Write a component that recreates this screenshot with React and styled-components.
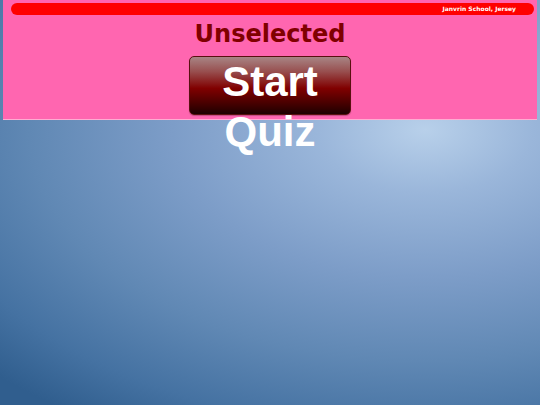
import React from "react";
import styled, { createGlobalStyle } from "styled-components";

const Global = createGlobalStyle`
  html, body {
    margin: 0;
    padding: 0;
    width: 540px;
    height: 405px;
    overflow: hidden;
  }
  body {
    background: radial-gradient(ellipse 600px 350px at 425px 130px, #b8d0ea 0%, #9ab6da 18%, #7d9dc8 42%, #6088b4 66%, #4572a2 86%, #305e8e 100%);
    font-family: "DejaVu Sans", sans-serif;
  }
`;

const Page = styled.div`
  width: 540px;
  height: 405px;
  display: flex;
  flex-direction: column;
`;

const Panel = styled.div`
  margin: 0 3px;
  height: 120px;
  box-sizing: border-box;
  background: #ff66b0;
  border-bottom: 1px solid rgba(255, 220, 235, 0.6);
  display: flex;
  flex-direction: column;
  align-items: center;
  padding-top: 3px;
`;

const TopBar = styled.div`
  align-self: stretch;
  margin: 0 3px 0 8px;
  height: 12px;
  border-radius: 6px;
  background: #ff0000;
  color: #ffffff;
  font-family: "DejaVu Sans", sans-serif;
  font-weight: bold;
  font-size: 6px;
  line-height: 12px;
  text-align: right;
  padding-right: 18px;
`;

const Title = styled.h1`
  margin: 5px 0 0;
  font-family: "DejaVu Sans", sans-serif;
  font-weight: bold;
  font-size: 24px;
  line-height: 28px;
  color: #800000;
`;

const StartButton = styled.div`
  margin-top: 8px;
  width: 162px;
  height: 59px;
  box-sizing: border-box;
  border: 1px solid #5a1010;
  border-radius: 5px;
  background: linear-gradient(to bottom, #a88585 0%, #985050 25%, #800000 55%, #4a0000 80%, #1e0000 100%);
  box-shadow: 0 1px 1px rgba(0, 0, 0, 0.25);
  color: #ffffff;
  font-family: "Liberation Sans", Arial, sans-serif;
  font-weight: bold;
  font-size: 42px;
  line-height: 50px;
  text-align: center;
  overflow: visible;
  cursor: pointer;
`;

export default function App() {
  return (
    <>
      <Global />
      <Page>
        <Panel>
          <TopBar>Janvrin School, Jersey</TopBar>
          <Title>Unselected</Title>
          <StartButton role="button">Start Quiz</StartButton>
        </Panel>
      </Page>
    </>
  );
}
